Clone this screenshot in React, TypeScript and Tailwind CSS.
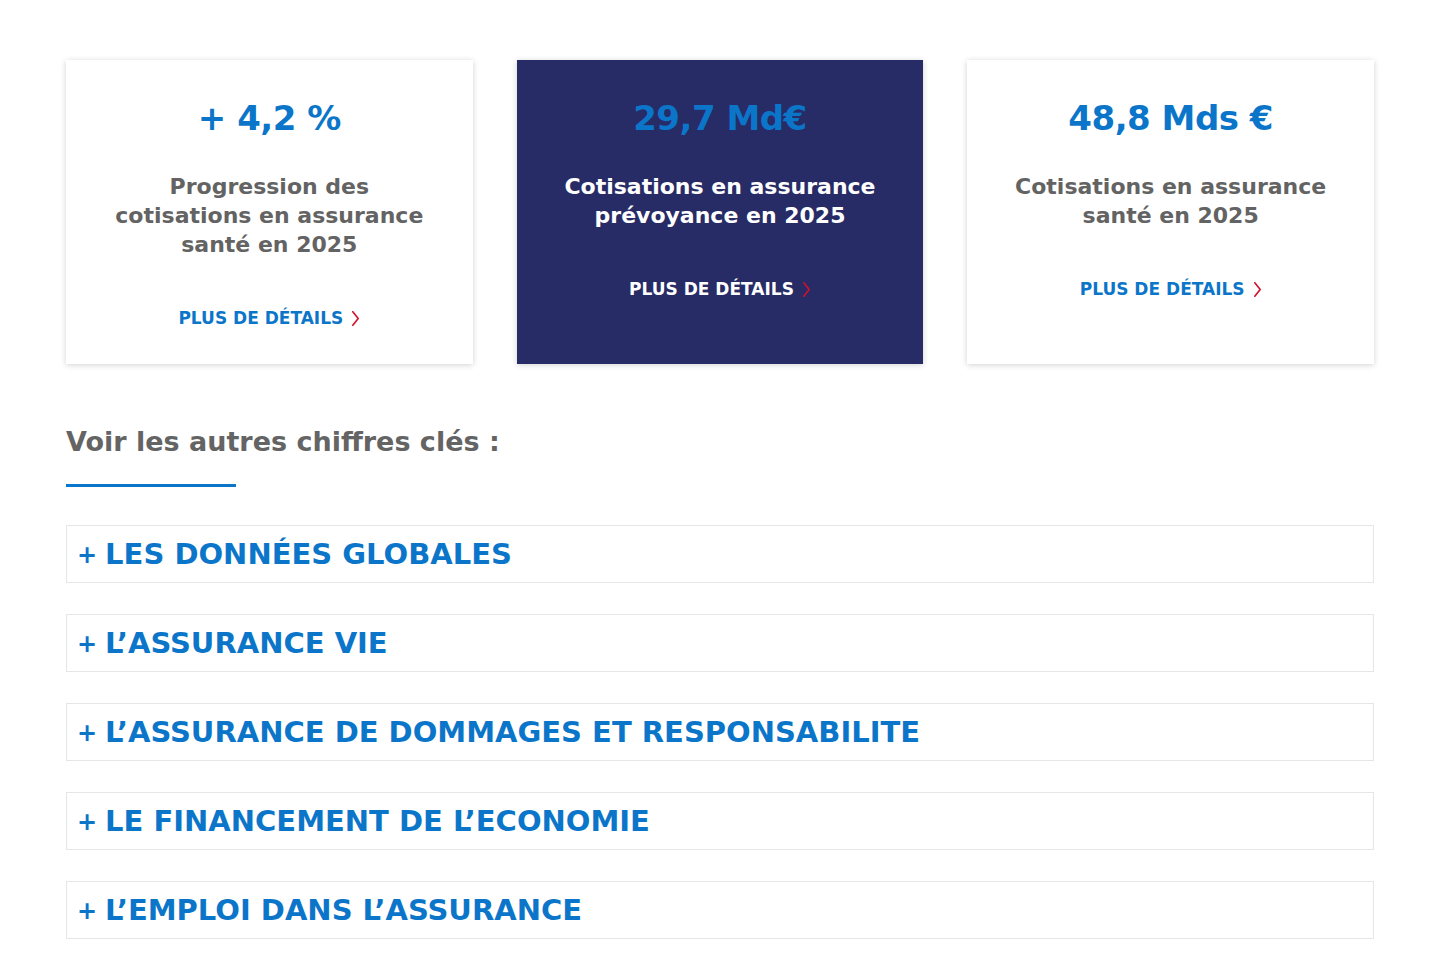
const font = { fontFamily: '"DejaVu Sans", "Open Sans", sans-serif' }

type Stat = { value: string; label: string[]; dark?: boolean }

const stats: Stat[] = [
  { value: '+ 4,2 %', label: ['Progression des', 'cotisations en assurance', 'santé en 2025'] },
  { value: '29,7 Md€', label: ['Cotisations en assurance', 'prévoyance en 2025'], dark: true },
  { value: '48,8 Mds €', label: ['Cotisations en assurance', 'santé en 2025'] },
]

const sections = [
  'Les données globales',
  'L’assurance vie',
  'L’assurance de dommages et responsabilite',
  'Le financement de l’economie',
  'L’emploi dans l’assurance',
]

function Chevron() {
  return (
    <svg viewBox="0 0 10 18" width="9" height="17" className="ml-2 inline-block">
      <path d="M2 1.5 L8 9 L2 16.5" fill="none" stroke="#d2102c" strokeWidth="1.8" strokeLinecap="round" strokeLinejoin="round" />
    </svg>
  )
}

function StatCard({ s }: { s: Stat }) {
  return (
    <div
      className={`flex flex-col items-center text-center pt-[36px] pb-[34px] px-6 shadow-[0_1px_6px_rgba(0,0,0,0.18)] ${
        s.dark ? 'bg-[#272b66]' : 'bg-white'
      }`}
    >
      <div className="text-[34px] font-bold leading-[44px] tracking-[-0.5px] text-[#0b76c9]">{s.value}</div>
      <div className={`mt-[32px] text-[22px] font-bold leading-[29px] ${s.dark ? 'text-white' : 'text-[#636363]'}`}>
        {s.label.map((l) => (
          <div key={l}>{l}</div>
        ))}
      </div>
      <a className={`mt-[47px] flex items-center text-[17px] font-bold leading-[24px] uppercase ${s.dark ? 'text-white' : 'text-[#0b76c9]'}`}>
        Plus de détails
        <Chevron />
      </a>
    </div>
  )
}

export default function App() {
  return (
    <div className="min-h-screen bg-white" style={font}>
      <div className="mx-[66px] pt-[60px]">
        {/* chiffres clés */}
        <div className="grid grid-cols-3 gap-[44px]">
          {stats.map((s) => (
            <StatCard key={s.value} s={s} />
          ))}
        </div>

        <h2 className="mt-[60px] text-[27px] font-bold leading-[36px] text-[#646464]">Voir les autres chiffres clés :</h2>
        <div className="mt-[24px] h-[3px] w-[170px] bg-[#0b76c9]" />

        {/* accordéon */}
        <div className="mt-[38px] flex flex-col gap-[31px]">
          {sections.map((t) => (
            <button
              key={t}
              className="flex h-[58px] items-center gap-[8px] border border-[#e6e6e6] bg-white px-[10px] pt-[2px] text-left text-[29px] font-bold uppercase text-[#0b76c9]"
            >
              <span className="text-[24px]">+</span>
              <span>{t}</span>
            </button>
          ))}
        </div>
      </div>
    </div>
  )
}
